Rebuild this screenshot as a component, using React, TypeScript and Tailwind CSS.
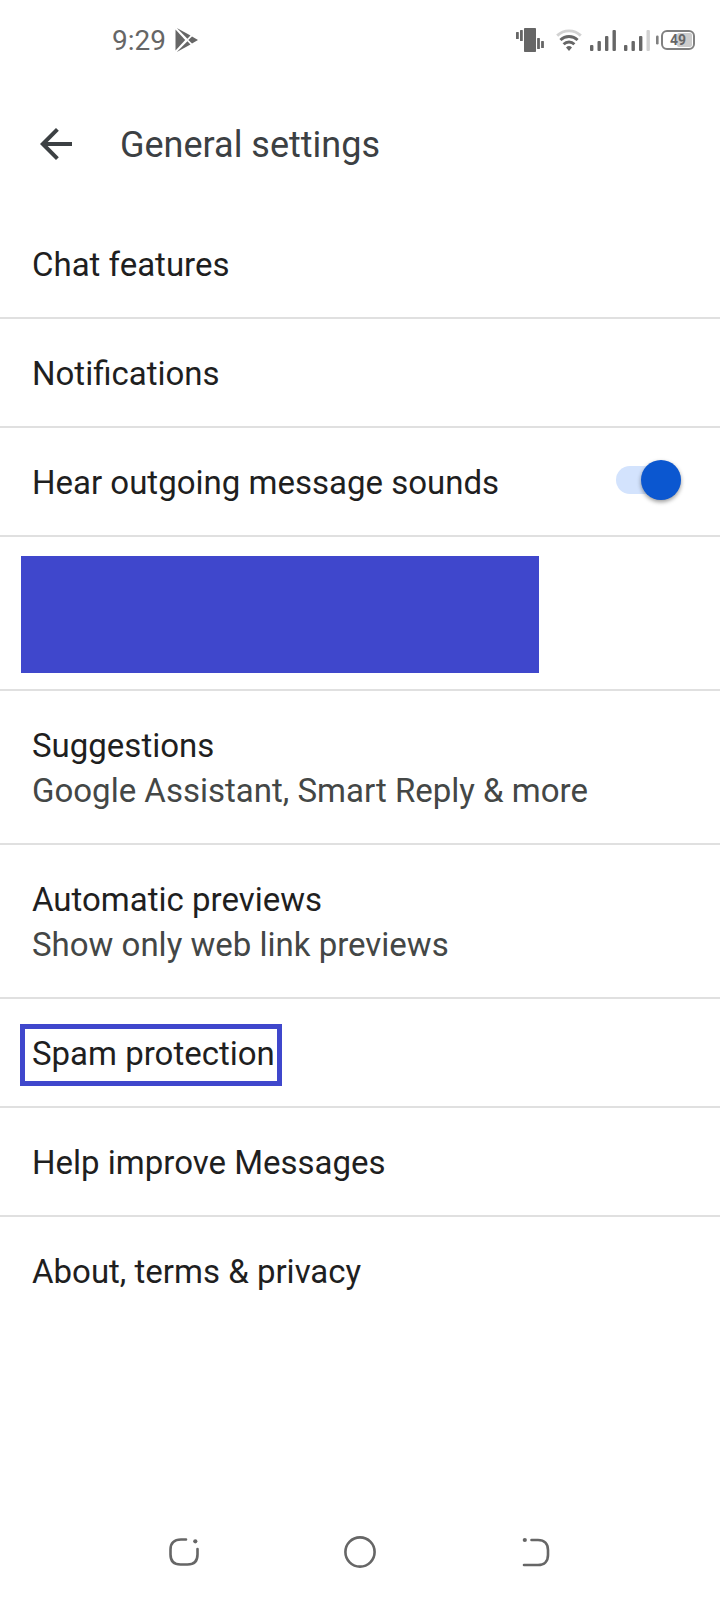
import { useState } from "react"

interface Setting {
    title: string,
    detail?: string,
    marked?: boolean
}

const upperSettings: Setting[] = [
    { title: "Chat features" },
    { title: "Notifications" },
]

const lowerSettings: Setting[] = [
    { title: "Suggestions", detail: "Google Assistant, Smart Reply & more" },
    { title: "Automatic previews", detail: "Show only web link previews" },
    { title: "Spam protection", marked: true },
    { title: "Help improve Messages" },
    { title: "About, terms & privacy" },
]

function StatusBar() {
    return (
        <div className="flex h-20 items-center justify-between pl-28 pr-6 text-[#666666]">
            <div className="flex items-center gap-2">
                <span className="pt-0.5 text-[28px] leading-8">9:29</span>
                <svg className="h-6 w-6" viewBox="0 0 24 24" fill="currentColor" aria-hidden="true">
                    <path d="M1.500 1.600 11.200 12 1.500 22.400Z" />
                    <path d="M2.800 0 16.500 7.600 13.400 10.800Z" />
                    <path d="M2.800 24 16.500 16.400 13.400 13.200Z" />
                    <path d="M18 8.400 24 12 18 15.600 14.400 12Z" />
                </svg>
            </div>
            <div className="flex items-center">
                <svg className="h-6 w-7" viewBox="0 0 28 24" fill="currentColor" aria-hidden="true">
                    <rect x="0" y="4" width="2.8" height="7" rx="0.6" />
                    <rect x="4" y="2" width="2.8" height="11" rx="0.6" />
                    <rect x="8" y="0" width="12" height="24" rx="0.8" />
                    <rect x="21.1" y="10" width="2.8" height="11" rx="0.6" />
                    <rect x="25.1" y="13" width="2.8" height="7" rx="0.6" />
                </svg>
                <svg className="ml-3 h-6 w-[26px]" viewBox="0 0 26 24" fill="none" stroke="currentColor" strokeWidth="2.9" aria-hidden="true">
                    <path d="M1.200 7.600a17 17 0 0 1 23.600 0" stroke="#d2d2d2" />
                    <path d="M4.400 12a12.400 12.400 0 0 1 17.200 0" />
                    <path d="M7.600 16.200a7.800 7.800 0 0 1 10.800 0" />
                    <path d="M10 19.400a4.600 4.600 0 0 1 6 0L13 23Z" fill="currentColor" stroke="none" />
                </svg>
                <Signal last="currentColor" />
                <Signal last="#d2d2d2" />
                <svg className="ml-1.5 h-6 w-10" viewBox="0 0 40 24" aria-label="Battery 49%">
                    <rect x="0" y="7.5" width="2.6" height="9" rx="1.2" fill="#808080" />
                    <rect x="21" y="5" width="15" height="14" rx="2" fill="#cccccc" />
                    <rect x="6" y="3" width="32" height="18" rx="5" fill="none" stroke="#808080" strokeWidth="2" />
                    <text x="22" y="17" textAnchor="middle" fontSize="14" fontWeight="700" fill="currentColor">49</text>
                </svg>
            </div>
        </div>
    )
}

function Signal({ last }: { last: string }) {
    return (
        <svg className="ml-2 h-6 w-[26px]" viewBox="0 0 26 24" fill="currentColor" aria-hidden="true">
            <rect x="0" y="17" width="3.4" height="6" rx="1" />
            <rect x="7.5" y="13" width="3.4" height="10" rx="1" />
            <rect x="15" y="8" width="3.4" height="15" rx="1" />
            <rect x="22.5" y="2" width="3.4" height="21" rx="1" fill={last} />
        </svg>
    )
}

function SettingRow({ title, detail, marked }: Setting) {
    return (
        <li className="border-b-2 border-[#e0e0e0] last:border-b-0">
            <button className="block w-full px-8 pb-[30px] pt-8 text-left" type="button">
                <span className="relative inline-block align-top">
                    {title}
                    {marked && <span className="absolute -left-3 -top-[7px] h-[62px] w-[262px] border-5 border-[#3f47cc]" />}
                </span>
                {detail && <span className="block text-[#444746]">{detail}</span>}
            </button>
        </li>
    )
}

export default function App() {
    const [sounds, setSounds] = useState<boolean>(true)

    return (
        <main className="flex min-h-screen w-full flex-col bg-white font-['Roboto',sans-serif] text-[#1f1f1f]">
            <StatusBar />

            <header className="flex h-32 items-center gap-12 px-10 text-[#3c4043]">
                <button type="button" aria-label="Back">
                    <svg className="h-8 w-8" viewBox="0 0 32 32" fill="none" stroke="currentColor" strokeWidth="4" aria-hidden="true">
                        <path d="M32 16H3M17.400 1.400 2.800 16l14.600 14.600" />
                    </svg>
                </button>
                <h1 className="pt-0.5 text-[36px] leading-[45px]">General settings</h1>
            </header>

            <ul className="mt-0.5 text-[33px] leading-[45px]">
                {upperSettings.map((item) => (
                    <SettingRow key={item.title} {...item} />
                ))}

                <li className="border-b-2 border-[#e0e0e0]">
                    <label className="flex items-center justify-between pb-[30px] pl-8 pr-[39px] pt-8">
                        Hear outgoing message sounds
                        <input
                            className="relative mb-1.5 h-7 w-[65px] shrink-0 appearance-none rounded-full bg-[#d3e3fd] before:absolute before:-top-1.5 before:left-0 before:size-10 before:rounded-full before:bg-[#0b57d0] before:shadow-[0_2px_4px_rgba(0,0,0,0.4)] checked:before:left-[25px]"
                            type="checkbox"
                            checked={sounds}
                            onChange={(e) => setSounds(e.target.checked)}
                        />
                    </label>
                </li>

                {/* hidden entry */}
                <li className="border-b-2 border-[#e0e0e0] pb-4 pl-[21px] pt-[19px]">
                    <div className="h-[117px] w-[518px] bg-[#3f47cc]" />
                </li>

                {lowerSettings.map((item) => (
                    <SettingRow key={item.title} {...item} />
                ))}
            </ul>

            <nav className="mt-auto flex h-24 items-center justify-center gap-36 text-[#666666]">
                <button type="button" aria-label="Recent apps">
                    <svg className="h-8 w-8" viewBox="0 0 32 32" fill="none" stroke="currentColor" strokeWidth="2.6" strokeLinecap="round" aria-hidden="true">
                        <path d="M18 3.500h-5C6 3.500 2.500 7 2.500 13.500v5c0 6.500 3.500 10 10 10h7c6.500 0 10-3.500 10-10V13" />
                        <circle cx="27.300" cy="5.300" r="2.100" fill="currentColor" stroke="none" />
                    </svg>
                </button>
                <button type="button" aria-label="Home">
                    <svg className="h-8 w-8" viewBox="0 0 32 32" fill="none" stroke="currentColor" strokeWidth="2.6" aria-hidden="true">
                        <circle cx="16" cy="16" r="14.600" />
                    </svg>
                </button>
                <button type="button" aria-label="Back navigation">
                    <svg className="h-8 w-8" viewBox="0 0 32 32" fill="none" stroke="currentColor" strokeWidth="2.6" strokeLinecap="round" aria-hidden="true">
                        <path d="M11.500 4H18c6.500 0 10 4 10 10v5c0 6-3.500 10-10 10H4" />
                        <circle cx="4.800" cy="4" r="2.100" fill="currentColor" stroke="none" />
                    </svg>
                </button>
            </nav>
        </main>
    )
}
